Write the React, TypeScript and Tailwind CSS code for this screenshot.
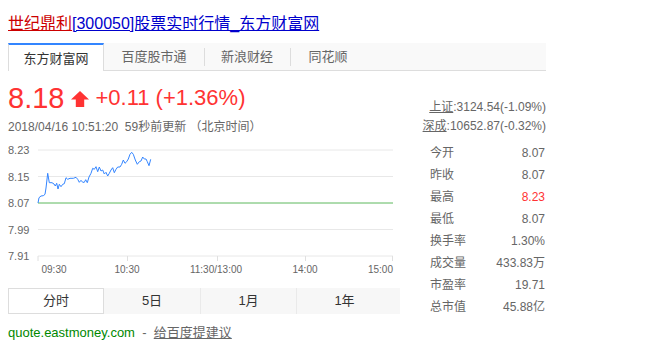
import React from 'react';

const FONT = "font-['Liberation_Sans','Noto_Sans_CJK_SC',sans-serif]";

// price line, in page coordinates (viewBox matches page)
const PRICE_POINTS: [number, number][] = [
  [38, 203], [39, 197.7], [41, 196], [43.3, 195.7], [45, 194.3], [46, 188], [47.7, 173.3],
  [49.3, 182.7], [52, 182.7], [54, 184], [55.3, 186], [56.7, 183.3], [58, 189], [59.3, 184.3],
  [61, 186.7], [62.7, 184.3], [64.3, 183.7], [66, 177.7], [67.7, 179.3], [70, 178.3],
  [73.3, 178.3], [76, 177.3], [77.7, 179.3], [79.3, 182.3], [81, 180.3], [82.7, 182.3],
  [84.3, 182.3], [85.7, 179.7], [87.3, 182.7], [89, 177], [91, 173.3], [92.7, 168.3],
  [94.3, 169.3], [96, 166.7], [97.7, 171.7], [99.3, 167], [101, 171], [102.7, 170],
  [104.3, 174], [106, 172.3], [107.7, 176], [109.3, 173.3], [111, 170], [112.7, 167.7],
  [114.3, 172.7], [116, 169.3], [117.7, 167], [120, 167], [121.7, 164.3], [123.3, 160],
  [125, 163.3], [126.7, 161.7], [128.3, 159], [130, 154.3], [131.7, 152.3], [133.3, 154.3],
  [135.3, 160], [137.3, 164.3], [139.3, 161.7], [141, 161], [142.7, 157], [144.3, 159],
  [146, 159], [147.3, 161.7], [149, 165.7], [150.7, 159.3],
];

const SOURCE_TABS = [
  { name: '东方财富网', w: 'w-[96px]', active: true },
  { name: '百度股市通', w: 'w-[100px]' },
  { name: '新浪财经', w: 'w-[86px]' },
  { name: '同花顺', w: 'w-[76px]' },
];

const STATS = [
  { label: '今开', value: '8.07' },
  { label: '昨收', value: '8.07' },
  { label: '最高', value: '8.23', up: true },
  { label: '最低', value: '8.07' },
  { label: '换手率', value: '1.30%' },
  { label: '成交量', value: '433.83万' },
  { label: '市盈率', value: '19.71' },
  { label: '总市值', value: '45.88亿' },
];

const PriceChart: React.FC = () => {
  const grid = [
    { y: 150, label: '8.23' },
    { y: 176.5, label: '8.15' },
    { y: 203, label: '8.07' },
    { y: 229.5, label: '7.99' },
    { y: 256, label: '7.91' },
  ];
  const ticks = [38, 127.5, 217.5, 305.5, 392.5];

  return (
    <svg width={392} height={140} viewBox="8 140 392 140" className="block">
      {grid.map((g) => (
        <g key={g.label}>
          {g.y !== 203 && (
            <line x1={38} x2={393} y1={g.y} y2={g.y} stroke="#e8e8e8" strokeWidth={1} />
          )}
          <text
            x={8}
            y={g.y + 4}
            fontSize={11}
            fill="#666"
            fontFamily="Liberation Sans, Arial, sans-serif"
          >
            {g.label}
          </text>
        </g>
      ))}
      <line x1={38} x2={393} y1={203} y2={203} stroke="#5cb85c" strokeWidth={1} />
      {ticks.map((x) => (
        <line key={x} x1={x} x2={x} y1={256} y2={261} stroke="#e0e0e0" strokeWidth={1} />
      ))}
      <polyline
        points={PRICE_POINTS.map(([x, y]) => `${x},${y}`).join(' ')}
        fill="none"
        stroke="#3385ff"
        strokeWidth={1}
        strokeLinejoin="round"
      />
      <g fontSize={10} fill="#666" fontFamily="Liberation Sans, Arial, sans-serif">
        <text x={41.5} y={272.5}>09:30</text>
        <text x={127} y={272.5} textAnchor="middle">10:30</text>
        <text x={216} y={272.5} textAnchor="middle">11:30/13:00</text>
        <text x={305} y={272.5} textAnchor="middle">14:00</text>
        <text x={393} y={272.5} textAnchor="end">15:00</text>
      </g>
    </svg>
  );
};

export default function App() {
  return (
    <div className={`${FONT} bg-white w-[661px] h-[357px] pl-[8px] pt-[12px]`}>
      <div className="h-[24px] leading-[24px] text-[16px]">
        <a className="text-[#c00] underline">世纪鼎利</a>
        <a className="text-[#00c] underline">[300050]股票实时行情_东方财富网</a>
      </div>

      <div className="mt-[7px] w-[538px] h-[28px] flex bg-[#f9f9f9] border-b border-[#ddd]">
        {SOURCE_TABS.map((t, i) =>
          t.active ? (
            <div
              key={t.name}
              className={`${t.w} h-[28px] flex items-center justify-center bg-white border-t-2 border-t-[#3385ff] border-x border-x-[#ddd] text-[13px] text-[#333] leading-none`}
            >
              {t.name}
            </div>
          ) : (
            <div key={t.name} className={`${t.w} h-[27px] flex items-center justify-center relative text-[13px] text-[#666] leading-none`}>
              {i > 1 && <span className="absolute left-0 top-[5px] h-[18px] w-px bg-[#ddd]" />}
              {t.name}
            </div>
          )
        )}
      </div>

      <div className="flex w-[538px]">
        <div className="w-[392px]">
          <div className="mt-[11px] h-[32px] flex items-center text-[#f33]">
            <span className="text-[29px] leading-[32px]">8.18</span>
            <svg width={18} height={16} viewBox="0 0 18 16" className="ml-[7px] mt-[1px]">
              <polygon points="9,0 18,8.5 13.2,8.5 13.2,16 4.8,16 4.8,8.5 0,8.5" fill="#f33" />
            </svg>
            <span className="ml-[6px] text-[22px] leading-[32px]">+0.11 (+1.36%)</span>
          </div>
          <div className="mt-[4px] h-[18px] leading-[18px] text-[12px] text-[#666] whitespace-pre">
            2018/04/16 10:51:20{'  '}59秒前更新 （北京时间）
          </div>
          <div className="mt-[4px]">
            <PriceChart />
          </div>
          <div className="mt-[8px] h-[26px] flex bg-[#f7f7f7] text-[13px] text-[#333]">
            <div className="w-[96px] flex items-center justify-center bg-white border border-[#ddd]">分时</div>
            <div className="w-[96px] flex items-center justify-center">5日</div>
            <div className="w-[96px] flex items-center justify-center border-l border-[#eaeaea]">1月</div>
            <div className="w-[96px] flex items-center justify-center border-l border-[#eaeaea]">1年</div>
          </div>
          <div className="mt-[9px] h-[20px] leading-[20px] text-[13px] whitespace-pre">
            <span className="text-[#080]">quote.eastmoney.com</span>
            <span className="text-[#666]">{'  -  '}</span>
            <a className="text-[#666] underline">给百度提建议</a>
          </div>
        </div>

        <div className="flex-1">
          <div className="mt-[27px] text-right text-[12px] leading-[19px] text-[#666]">
            <div>
              <a className="underline">上证</a>:3124.54(-1.09%)
            </div>
            <div>
              <a className="underline">深成</a>:10652.87(-0.32%)
            </div>
          </div>
          <div className="mt-[6px] pl-[30px] pr-px text-[12px] text-[#666]">
            {STATS.map((s) => (
              <div key={s.label} className="h-[22px] flex items-center justify-between">
                <span>{s.label}</span>
                <span className={s.up ? 'text-[#f33]' : ''}>{s.value}</span>
              </div>
            ))}
          </div>
        </div>
      </div>
    </div>
  );
}
